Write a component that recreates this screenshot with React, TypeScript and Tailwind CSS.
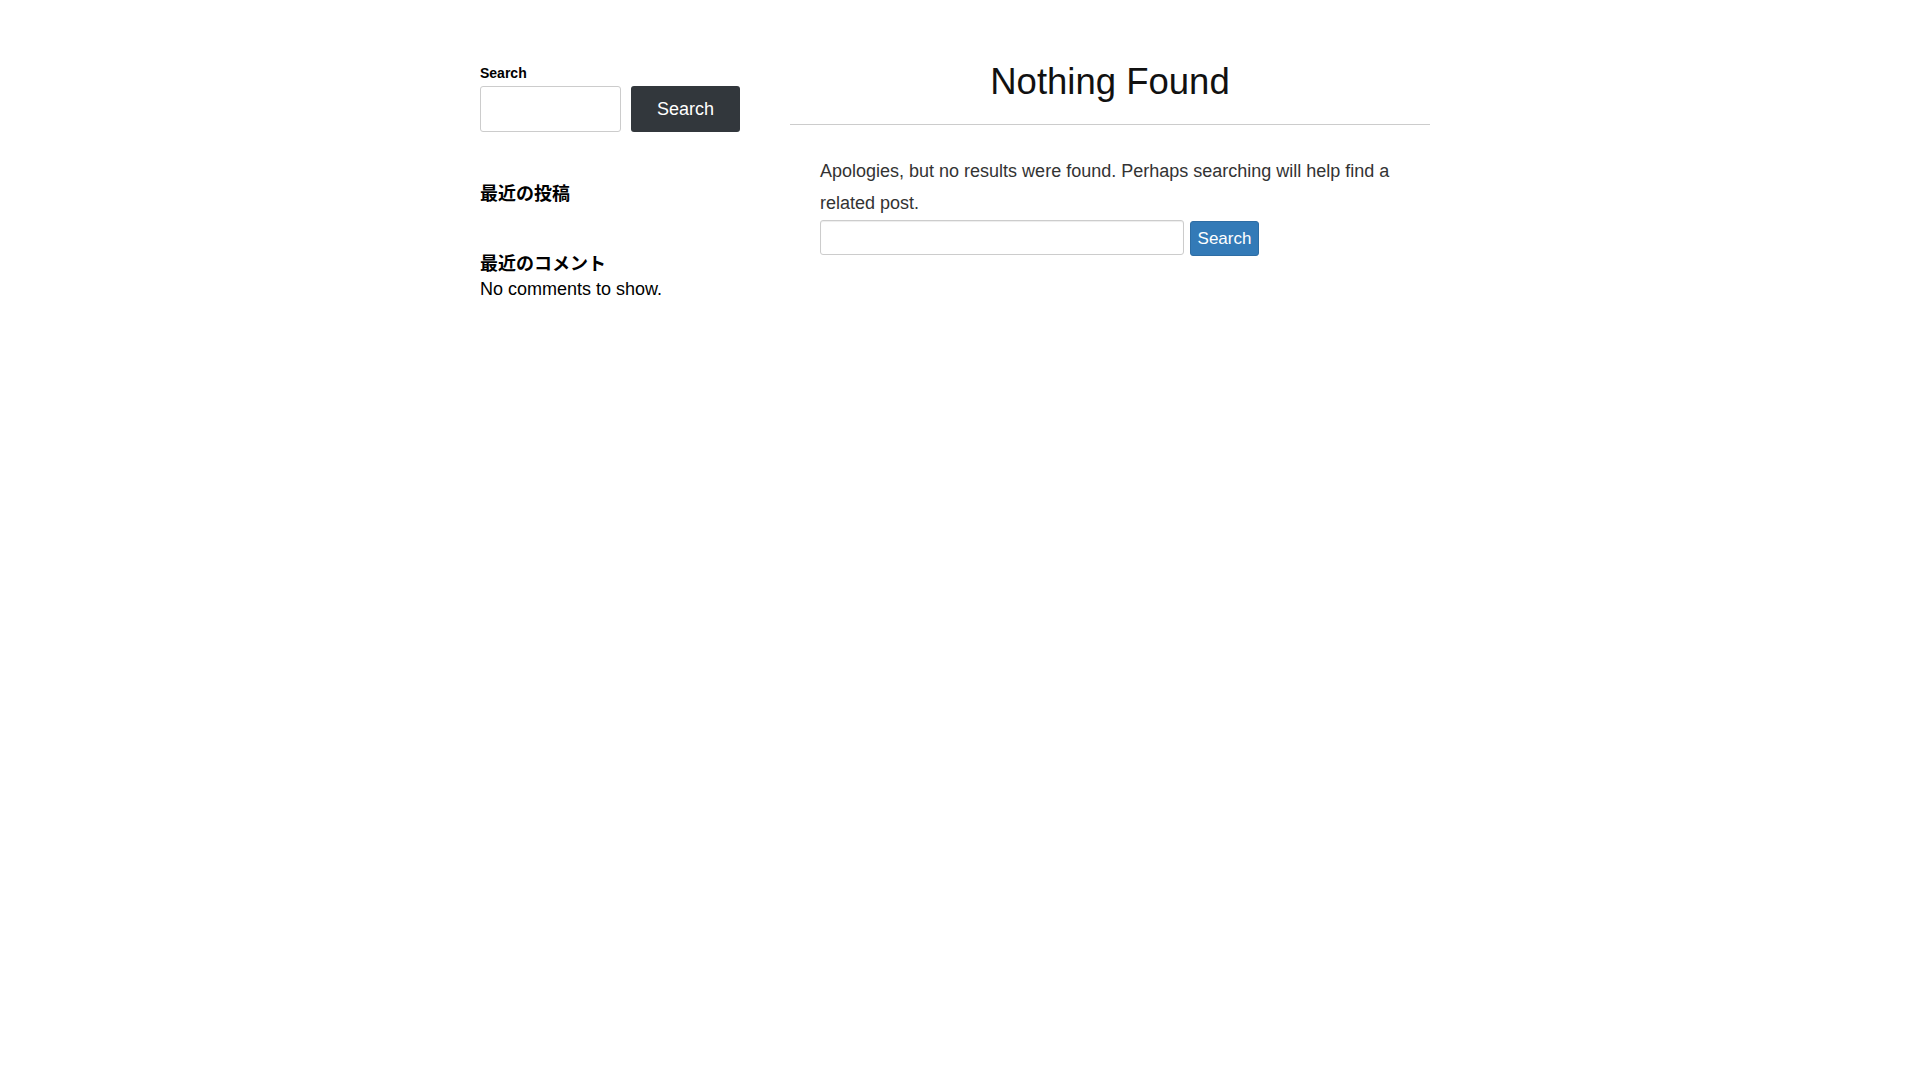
import React from "react";

export default function App() {
  const font = { fontFamily: '"Liberation Sans", "Noto Sans CJK JP", Arial, sans-serif' };
  return (
    <div className="min-h-screen bg-white" style={font}>
      <div className="mx-auto flex w-[960px] pt-[62px]">
        <aside className="w-[260px] shrink-0 text-black">
          <label className="block text-[14px] font-bold leading-[22px] mb-[2px]">Search</label>
          <div className="flex gap-[10px]">
            <input
              type="text"
              className="h-[46px] w-[141px] rounded-[3px] border border-[#cccccc] bg-white outline-none"
            />
            <button className="h-[46px] w-[109px] rounded-[3px] bg-[#32373c] text-[18px] leading-[18px] text-white">
              Search
            </button>
          </div>
          <h2 className="mt-[49px] text-[18px] font-bold leading-[27px]">最近の投稿</h2>
          <h2 className="mt-[43px] text-[18px] font-bold leading-[27px]">最近のコメント</h2>
          <p className="mt-[-2px] text-[18px] leading-[27px]">No comments to show.</p>
        </aside>
        <main className="ml-[50px] w-[640px] shrink-0">
          <h1 className="text-center text-[36.5px] font-normal leading-[40px] text-[#111111]">Nothing Found</h1>
          <hr className="mt-[22px] border-0 border-t border-[#cccccc]" />
          <div className="mt-[30px] px-[30px]">
            <p className="text-[18px] leading-[32px] text-[#333333]">
              Apologies, but no results were found. Perhaps searching will help find a related post.
            </p>
            <form className="mt-[1px] flex items-start gap-[6px]">
              <input
                type="text"
                className="h-[35px] w-[364px] rounded-[3px] border border-[#cccccc] bg-white shadow-[inset_0_1px_1px_rgba(0,0,0,0.075)] outline-none"
              />
              <button
                type="button"
                className="mt-[1px] h-[35px] w-[69px] rounded-[3px] border border-[#2e6da4] bg-[#337ab7] text-[17px] leading-[20px] text-white"
              >
                Search
              </button>
            </form>
          </div>
        </main>
      </div>
    </div>
  );
}
